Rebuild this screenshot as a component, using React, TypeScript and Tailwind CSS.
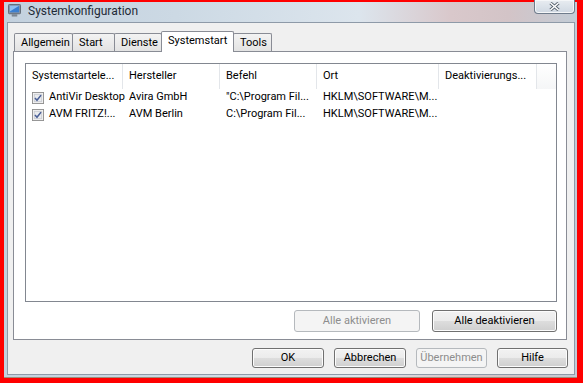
import React from 'react';

const font = { fontFamily: 'Roboto, "Liberation Sans", sans-serif' };

function Btn({ label, disabled, w }: { label: string; disabled?: boolean; w: string }) {
  return (
    <div
      className={`${w} flex items-center justify-center rounded-[3px] border text-[11px] ${
        disabled
          ? 'border-[#b5b9bd] bg-[#f4f4f4] text-[#8d8d8d]'
          : 'border-[#707070] bg-[linear-gradient(#f2f2f2_0%,#ebebeb_50%,#dddddd_51%,#cfcfcf_100%)] text-black shadow-[inset_0_0_0_1px_#fcfcfc]'
      }`}
    >
      {label}
    </div>
  );
}

function Check() {
  return (
    <svg width="12" height="12" viewBox="0 0 13 13" className="shrink-0">
      <rect x="0.5" y="0.5" width="12" height="12" fill="#f4f4f4" stroke="#8f8f8f" />
      <rect x="2.5" y="2.5" width="8" height="8" fill="#e9ebee" stroke="#c9ccd1" />
      <path d="M3.2 6.6 L5.4 9 L9.8 3.4" fill="none" stroke="#4a5f97" strokeWidth="1.7" />
    </svg>
  );
}

const cols = [
  { w: 'w-[97px]', t: 'Systemstartele...' },
  { w: 'w-[97px]', t: 'Hersteller' },
  { w: 'w-[97px]', t: 'Befehl' },
  { w: 'w-[122px]', t: 'Ort' },
  { w: 'w-[98px]', t: 'Deaktivierungs...' },
];

const rows = [
  ['AntiVir Desktop', 'Avira GmbH', '"C:\\Program Fil...', 'HKLM\\SOFTWARE\\M...', ''],
  ['AVM FRITZ!...', 'AVM Berlin', 'C:\\Program Fil...', 'HKLM\\SOFTWARE\\M...', ''],
];

const tabs = [
  { t: 'Allgemein', w: 'w-[59px]' },
  { t: 'Start', w: 'w-[43px]' },
  { t: 'Dienste', w: 'w-[48px]' },
  { t: 'Systemstart', w: 'w-[73px]', sel: true },
  { t: 'Tools', w: 'w-[39px]' },
];

export default function App() {
  return (
    <div className="w-[583px] h-[383px] bg-[#ff0000] pt-[2px] pl-[4px] pr-[6px] pb-[5px]" style={font}>
      <div className="h-full flex flex-col bg-[linear-gradient(90deg,#c3d1de_0%,#ccd9e4_30%,#dce5ed_62%,#d9c8cb_78%,#d3c4c7_88%,#c2ccd6_100%)] pl-[3px] pr-[2px] pb-[2px] border-b border-[#a08c78]">
        <div className="h-[20px] flex items-start shrink-0">
          <svg width="13" height="13" viewBox="0 0 14 14" className="ml-[1px] mt-[2px]">
            <rect x="0.5" y="0.5" width="13" height="10" rx="1" fill="#8b96a3" stroke="#5d6772" />
            <rect x="2" y="2" width="10" height="7" fill="#3b7fd0" />
            <path d="M2 2 L12 2 L2 8 Z" fill="#8fc0f0" />
            <rect x="4" y="11" width="6" height="2.5" fill="#7c8794" />
          </svg>
          <span className="ml-[7px] mt-[1px] text-[12px] text-[#1e2a36] leading-[16px]">Systemkonfiguration</span>
          <div className="flex-1" />
          <div className="-mt-[2px] w-[41px] h-[14px] rounded-b-[4px] border border-t-0 border-[#6f7c8c] bg-[linear-gradient(#e8ecf1,#cfd8e2)] shadow-[inset_0_0_0_1px_#f4f6f8] flex items-center justify-center">
            <svg width="11" height="9" viewBox="0 0 11 9">
              <path d="M1.5 1 L9.5 8 M9.5 1 L1.5 8" stroke="#55606c" strokeWidth="3.2" />
              <path d="M1.5 1 L9.5 8 M9.5 1 L1.5 8" stroke="#ffffff" strokeWidth="1.6" />
            </svg>
          </div>
        </div>

        <div className="flex-1 flex flex-col bg-[#f0f0f0] border border-[#8e9aa8] pt-[7px] pl-[6px] pr-[7px] text-black">
          <div className="flex items-end h-[21px] relative z-10">
            {tabs.map((tab) =>
              tab.sel ? (
                <div
                  key={tab.t}
                  className={`${tab.w} -ml-px h-[21px] -mb-px bg-white border border-b-0 border-[#898c95] rounded-t-[2px] pl-[6px] pt-[1px] text-[11px] leading-[16px] whitespace-nowrap`}
                >
                  {tab.t}
                </div>
              ) : (
                <div
                  key={tab.t}
                  className={`${tab.w} -ml-px first:ml-0 h-[18px] bg-[linear-gradient(#f3f3f3,#e3e3e3)] border border-b-0 border-[#898c95] rounded-t-[2px] pl-[6px] text-[11px] leading-[18px] whitespace-nowrap`}
                >
                  {tab.t}
                </div>
              )
            )}
          </div>
          <div className="h-[289px] -ml-px bg-white border border-[#898c95] pt-[11px] pl-[11px] pr-[9px] pb-[7px] flex flex-col">
            <div className="h-[239px] border border-[#828790] bg-white flex flex-col">
              <div className="flex h-[25px] shrink-0 text-[11px]">
                {cols.map((c) => (
                  <div key={c.t} className={`${c.w} border-r border-[#e3e6ea] pl-[6px] flex items-center whitespace-nowrap`}>
                    {c.t}
                  </div>
                ))}
                <div className="flex-1 bg-[linear-gradient(#ffffff,#f5f6f7)]" />
              </div>
              {rows.map((r, i) => (
                <div key={i} className="flex h-[17px] text-[11px] items-center">
                  <div className="w-[97px] flex items-center pl-[6px] gap-[5px] whitespace-nowrap">
                    <Check />
                    <span>{r[0]}</span>
                  </div>
                  <div className="w-[97px] pl-[6px] whitespace-nowrap">{r[1]}</div>
                  <div className="w-[97px] pl-[6px] whitespace-nowrap">{r[2]}</div>
                  <div className="w-[122px] pl-[6px] whitespace-nowrap">{r[3]}</div>
                  <div className="w-[98px] pl-[6px]">{r[4]}</div>
                </div>
              ))}
            </div>
            <div className="flex justify-end gap-[12px] mt-[8px] h-[22px]">
              <Btn label="Alle aktivieren" disabled w="w-[126px]" />
              <Btn label="Alle deaktivieren" w="w-[125px]" />
            </div>
          </div>
          <div className="flex justify-end gap-[10px] mt-[8px] h-[20px] -mr-[1px]">
            <Btn label="OK" w="w-[72px]" />
            <Btn label="Abbrechen" w="w-[72px]" />
            <Btn label="Übernehmen" disabled w="w-[71px]" />
            <Btn label="Hilfe" w="w-[71px]" />
          </div>
        </div>
      </div>
    </div>
  );
}
